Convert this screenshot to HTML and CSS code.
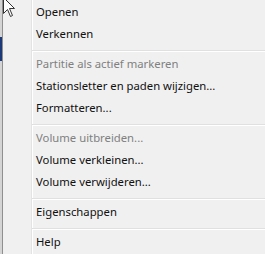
FILE: index.html
```html
<!DOCTYPE html>
<html lang="nl">

<head>
    <meta charset="UTF-8">
    <title>Contextmenu</title>
    <link rel="stylesheet" href="styles.css">
</head>

<body>
    <div class="screen">
        <div class="backdrop">
            <div class="backdrop-sel"></div>
        </div>
        <div class="menu">
            <div class="item">Openen</div>
            <div class="item">Verkennen</div>
            <div class="sep"></div>
            <div class="item disabled">Partitie als actief markeren</div>
            <div class="item">Stationsletter en paden wijzigen...</div>
            <div class="item">Formatteren...</div>
            <div class="sep"></div>
            <div class="item disabled">Volume uitbreiden...</div>
            <div class="item">Volume verkleinen...</div>
            <div class="item">Volume verwijderen...</div>
            <div class="sep"></div>
            <div class="item">Eigenschappen</div>
            <div class="sep"></div>
            <div class="item">Help</div>
        </div>
        <!-- mouse cursor over the menu -->
        <svg class="cursor" width="14" height="22" viewBox="0 0 14 22">
            <path d="M0.5 0.5 L0.5 16.5 L4.5 12.5 L7.5 19.5 L9.5 18.5 L6.5 11.5 L11.5 11.5 Z" fill="#fff" stroke="#333" stroke-width="1" stroke-linejoin="miter"/>
        </svg>
    </div>
</body>

</html>
```

FILE: styles.css
```css
* {
    box-sizing: border-box;
}

body {
    margin: 0;
    background: #f0f0f0;
    font-family: "Noto Sans", "Open Sans", sans-serif;
    font-size: 11.3px;
}

.screen {
    position: relative;
    display: flex;
    width: 265px;
    height: 254px;
    overflow: hidden;
}

.backdrop {
    width: 2px;
    background: #d4d4d4;
    padding-top: 37px;
}

.backdrop-sel {
    height: 24px;
    background: #1c3a78;
}

.menu {
    flex: 1;
    padding-top: 1px;
    border-left: 1px solid #8f8f8f;
    background: #f0f0f0 linear-gradient(to right, transparent 28px, #e2e3e3 28px, #e2e3e3 29px, #fff 29px, #fff 30px, transparent 30px);
}

.item {
    height: 22px;
    line-height: 22px;
    padding-left: 33px;
    color: #111;
    white-space: nowrap;
}

.item.disabled {
    color: #808080;
}

.sep {
    height: 2px;
    margin: 5px 0 1px 29px;
    border-top: 1px solid #e0e0e0;
    border-bottom: 1px solid #fff;
}

.cursor {
    position: absolute;
    left: 3px;
    top: -3px;
}
```
